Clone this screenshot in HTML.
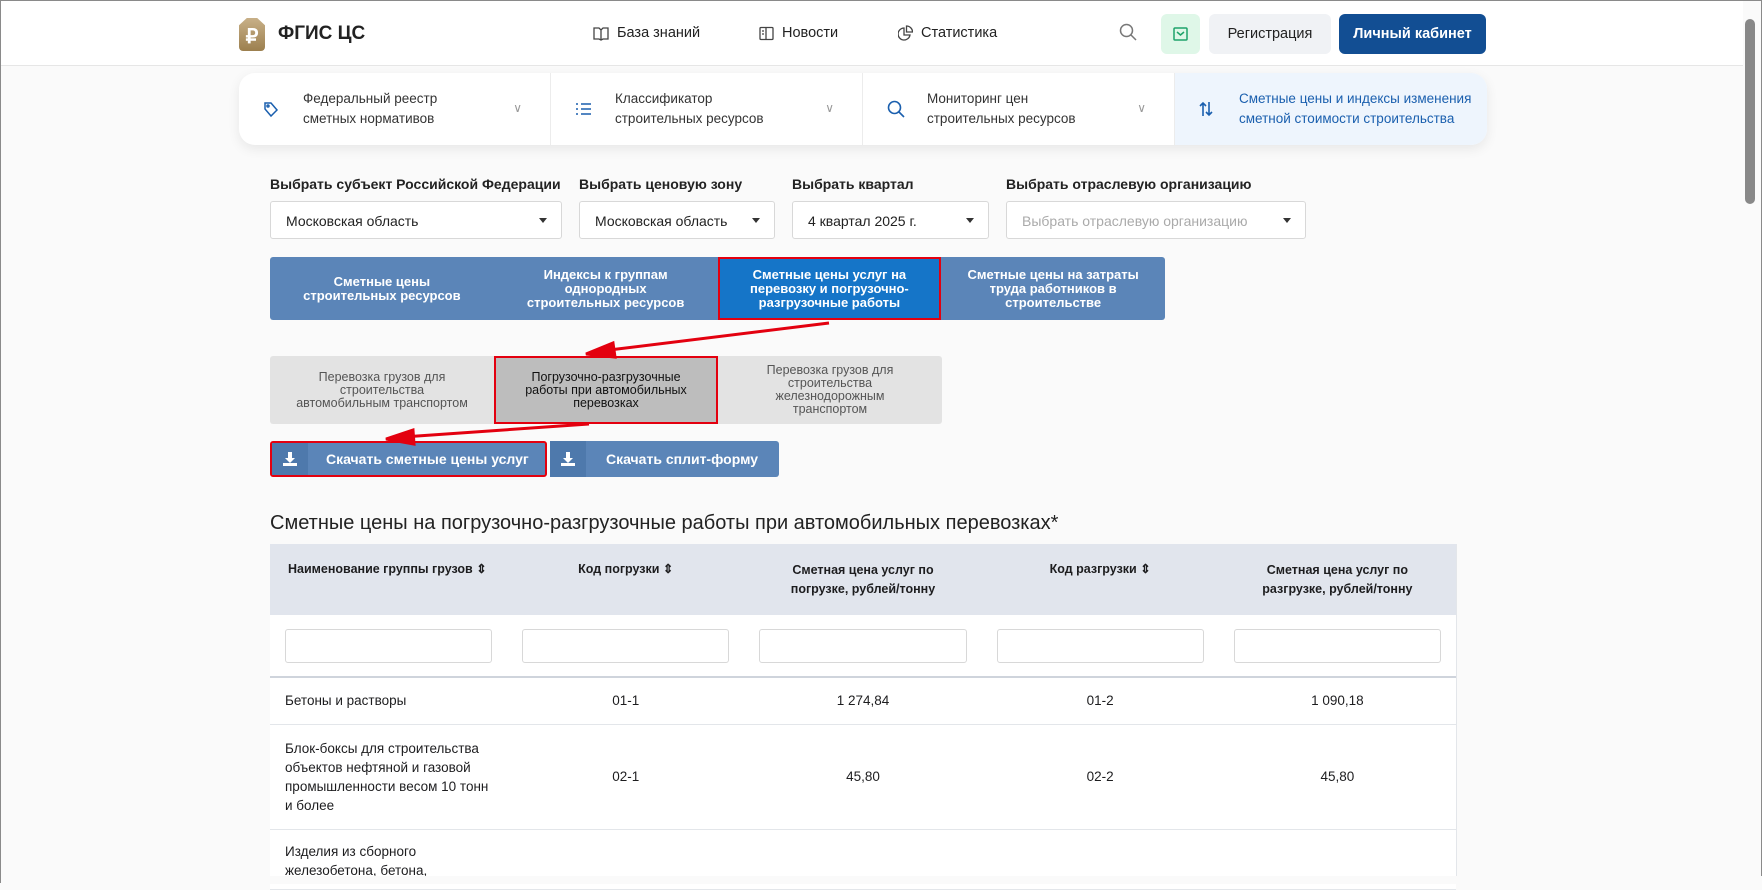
<!DOCTYPE html>
<html><head><meta charset="utf-8"><style>
*{box-sizing:border-box;margin:0;padding:0}
body{width:1762px;height:883px;overflow:hidden;background:#fafafa;font-family:"Liberation Sans",sans-serif;color:#1d1d1f;position:relative;border:1px solid #8a8a8a}
.abs{position:absolute}
.hdr{left:0;top:0;width:1742px;height:65px;background:#fff;border-bottom:1px solid #e6e6e6}
.nav{font-size:14.5px;color:#222;display:flex;align-items:center;gap:8px;top:24px}
.card{left:238px;top:72px;width:1248px;height:72px;background:#fff;border-radius:16px;box-shadow:0 4px 12px rgba(0,0,0,.08);display:flex;overflow:hidden}
.card>div{width:312px;display:flex;align-items:center;padding-left:24px;font-size:13.5px;line-height:20px;color:#333;border-right:1px solid #ececec;position:relative;white-space:nowrap}
.card .ic{width:40px;color:#1a5fae;display:flex}
.card .chev{position:absolute;right:28px;top:25px;color:#999;font-size:12px}
.lbl{font-size:14px;font-weight:bold;top:175px;color:#222}
.sel{top:200px;height:38px;background:#fff;border:1px solid #d8d8d8;border-radius:3px;font-size:14px;padding:11px 15px;color:#222}
.sel:after{content:"";position:absolute;right:14px;top:16px;border:4px solid transparent;border-top:5px solid #333}
.tabs{left:269px;top:256px;width:895px;height:63px;background:#5b85b8;border-radius:3px;display:flex}
.tabs div{width:224px;color:#fff;font-weight:bold;font-size:13px;line-height:14px;display:flex;align-items:center;justify-content:center;text-align:center}
.sub{left:269px;top:355px;width:672px;height:68px;background:#e3e3e3;border-radius:3px;display:flex}
.sub div{width:224px;font-size:12.5px;line-height:13px;color:#555;display:flex;align-items:center;justify-content:center;text-align:center}
.btn{top:440px;height:36px;background:#5b85b8;border-radius:3px;color:#fff;font-weight:bold;font-size:14px;display:flex;align-items:center}
.btn .i{width:36px;height:100%;background:#4e79ac;display:flex;align-items:center;justify-content:center}
.red{border:2px solid #e3000f}
table{border-collapse:collapse;position:absolute;left:269px;top:543px;width:1186px;background:#fff;font-size:13.5px}
td,th{width:237px}
th{background:#e1e5ed;height:71px;font-size:12.5px;font-weight:bold;line-height:19px}
.f td{height:62px;border-bottom:2px solid #cfd4dc;padding:0 15px}
.f span{display:block;height:34px;border:1px solid #d8d8d8;border-radius:3px}
.r td{border-bottom:1px solid #e3e6ea;text-align:center;line-height:19px}
.r td:first-child{text-align:left;padding-left:15px}
</style></head><body>
<div class="abs hdr"></div>
<div class="abs" style="left:238px;top:17px;width:26px;height:33px;background:linear-gradient(#c8b088,#9c7f4e);border-radius:6px 6px 4px 4px;clip-path:polygon(30% 0,70% 0,100% 22%,100% 100%,0 100%,0 22%);color:#fff;font-weight:bold;font-size:20px;text-align:center;line-height:38px">₽</div>
<div class="abs" style="left:277px;top:22px;font-size:19px;font-weight:bold;color:#222">ФГИС ЦС</div>
<div class="abs nav" style="left:592px"><svg width="16" height="15" viewBox="0 0 16 15" fill="none" stroke="#444" stroke-width="1.3"><path d="M1 2h5l2 2 2-2h5v11h-5l-2 1-2-1H1z M8 4v10"/></svg>База знаний</div>
<div class="abs nav" style="left:758px"><svg width="15" height="15" viewBox="0 0 15 15" fill="none" stroke="#444" stroke-width="1.3"><rect x="1" y="1.5" width="13" height="12" rx="1"/><path d="M7 1.5v12M3 5h2M3 8h2"/></svg>Новости</div>
<div class="abs nav" style="left:897px"><svg width="15" height="16" viewBox="0 0 15 16" fill="none" stroke="#444" stroke-width="1.3"><path d="M6 3a6 6 0 1 0 6 7H6z M8.5 1v6h6a6 6 0 0 0-6-6z"/></svg>Статистика</div>
<svg class="abs" style="left:1118px;top:22px" width="18" height="19" viewBox="0 0 18 19" fill="none" stroke="#777" stroke-width="1.5"><circle cx="7.5" cy="7.5" r="6"/><path d="M12 12l5 5"/></svg>
<div class="abs" style="left:1160px;top:13px;width:39px;height:40px;background:#dff7e8;border-radius:6px"><svg style="position:absolute;left:12px;top:13px" width="15" height="14" viewBox="0 0 15 14" fill="none" stroke="#1ea36a" stroke-width="1.5"><rect x="1" y="1" width="13" height="12" rx="1"/><path d="M4 5l3.5 3L11 5"/></svg></div>
<div class="abs" style="left:1208px;top:13px;width:122px;height:40px;background:#f0f2f5;border-radius:6px;font-size:14.5px;text-align:center;line-height:40px;color:#222">Регистрация</div>
<div class="abs" style="left:1338px;top:13px;width:147px;height:40px;background:#124e93;border-radius:6px;font-size:14.5px;font-weight:bold;text-align:center;line-height:40px;color:#fff">Личный кабинет</div>
<div class="abs card">
<div><span class="ic"><svg width="16" height="17" viewBox="0 0 16 17" fill="none" stroke="#1a5fae" stroke-width="1.5"><path d="M2 2h6l6 7-6 6-6-7z"/><circle cx="5" cy="5" r="1"/></svg></span><span>Федеральный реестр<br>сметных нормативов</span><span class="chev">∨</span></div>
<div><span class="ic"><svg width="17" height="14" viewBox="0 0 17 14" stroke="#1a5fae" stroke-width="1.5"><path d="M1 2h2M1 7h2M1 12h2M6 2h10M6 7h10M6 12h10"/></svg></span><span>Классификатор<br>строительных ресурсов</span><span class="chev">∨</span></div>
<div><span class="ic"><svg width="18" height="18" viewBox="0 0 18 18" fill="none" stroke="#1a5fae" stroke-width="1.6"><circle cx="7.5" cy="7.5" r="6"/><path d="M12 12l5 5"/></svg></span><span>Мониторинг цен<br>строительных ресурсов</span><span class="chev">∨</span></div>
<div style="background:#eef5fd;color:#1a5fae;border:0"><span class="ic"><svg width="14" height="16" viewBox="0 0 14 16" fill="none" stroke="#1a5fae" stroke-width="1.6"><path d="M4 15V2M1 5l3-3 3 3M10 1v13M7 11l3 3 3-3"/></svg></span><span>Сметные цены и индексы изменения<br>сметной стоимости строительства</span></div>
</div>
<div class="abs lbl" style="left:269px">Выбрать субъект Российской Федерации</div>
<div class="abs lbl" style="left:578px">Выбрать ценовую зону</div>
<div class="abs lbl" style="left:791px">Выбрать квартал</div>
<div class="abs lbl" style="left:1005px">Выбрать отраслевую организацию</div>
<div class="abs sel" style="left:269px;width:292px">Московская область</div>
<div class="abs sel" style="left:578px;width:196px">Московская область</div>
<div class="abs sel" style="left:791px;width:197px">4 квартал 2025 г.</div>
<div class="abs sel" style="left:1005px;width:300px;color:#aaa">Выбрать отраслевую организацию</div>
<div class="abs tabs">
<div>Сметные цены<br>строительных ресурсов</div>
<div>Индексы к группам<br>однородных<br>строительных ресурсов</div>
<div class="red" style="background:#1575c8">Сметные цены услуг на<br>перевозку и погрузочно-<br>разгрузочные работы</div>
<div>Сметные цены на затраты<br>труда работников в<br>строительстве</div>
</div>
<div class="abs sub">
<div>Перевозка грузов для<br>строительства<br>автомобильным транспортом</div>
<div class="red" style="background:#bdbdbd;color:#111">Погрузочно-разгрузочные<br>работы при автомобильных<br>перевозках</div>
<div>Перевозка грузов для<br>строительства<br>железнодорожным<br>транспортом</div>
</div>
<div class="abs btn red" style="left:269px;width:277px"><span class="i"><svg width="14" height="14" viewBox="0 0 14 14" fill="#fff"><path d="M5 0h4v6h3L7 11 2 6h3z"/><rect x="0" y="11" width="14" height="3"/></svg></span><span style="margin-left:18px">Скачать сметные цены услуг</span></div>
<div class="abs btn" style="left:549px;width:229px"><span class="i"><svg width="14" height="14" viewBox="0 0 14 14" fill="#fff"><path d="M5 0h4v6h3L7 11 2 6h3z"/><rect x="0" y="11" width="14" height="3"/></svg></span><span style="margin-left:20px">Скачать сплит-форму</span></div>
<svg class="abs" style="left:0;top:0" width="1762" height="883"><g stroke="#e3000f" stroke-width="3" fill="#e3000f"><line x1="828" y1="322" x2="600" y2="350"/><polygon points="585,353 612,342 614,356"/><line x1="588" y1="423" x2="402" y2="436"/><polygon points="385,438 412,429 413,443"/></g></svg>
<div class="abs" style="left:269px;top:511px;font-size:20px;color:#222">Сметные цены на погрузочно-разгрузочные работы при автомобильных перевозках*</div>
<table>
<tr><th style="text-align:left;padding-left:18px;vertical-align:top;padding-top:16px">Наименование группы грузов ⇕</th><th style="vertical-align:top;padding-top:16px">Код погрузки ⇕</th><th>Сметная цена услуг по<br>погрузке, рублей/тонну</th><th style="vertical-align:top;padding-top:16px">Код разгрузки ⇕</th><th>Сметная цена услуг по<br>разгрузке, рублей/тонну</th></tr>
<tr class="f"><td><span></span></td><td><span></span></td><td><span></span></td><td><span></span></td><td><span></span></td></tr>
<tr class="r" style="height:47px"><td>Бетоны и растворы</td><td>01-1</td><td>1 274,84</td><td>01-2</td><td>1 090,18</td></tr>
<tr class="r" style="height:105px"><td>Блок-боксы для строительства<br>объектов нефтяной и газовой<br>промышленности весом 10 тонн<br>и более</td><td>02-1</td><td>45,80</td><td>02-2</td><td>45,80</td></tr>
<tr class="r" style="height:60px"><td style="vertical-align:top;padding-top:12px">Изделия из сборного<br>железобетона, бетона,</td><td></td><td></td><td></td><td></td></tr>
</table>
<div class="abs" style="left:1455px;top:543px;width:1px;height:332px;background:#e3e6ea"></div>
<div class="abs" style="left:0;top:875px;width:1762px;height:8px;background:#fafafa"></div>
<div class="abs" style="left:1744px;top:18px;width:10px;height:185px;background:#888;border-radius:5px"></div>
</body></html>
